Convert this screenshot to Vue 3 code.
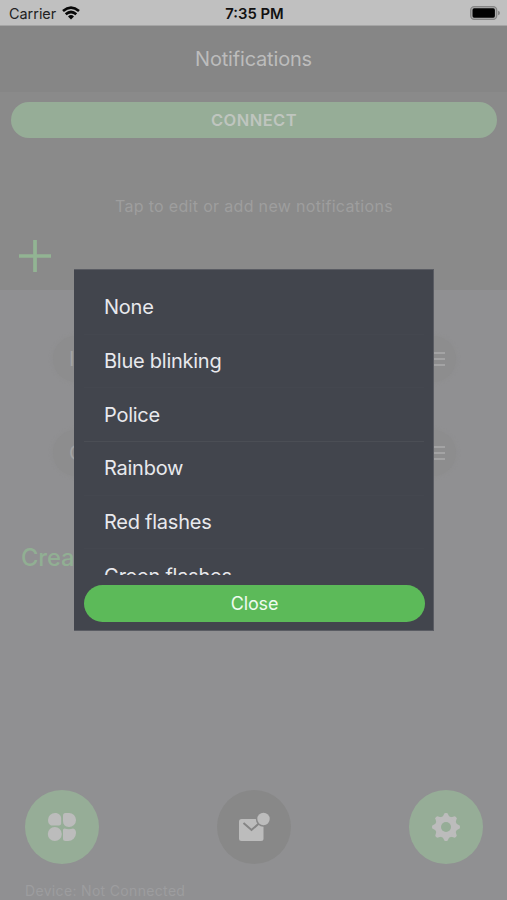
<script setup>
const effects = ['None', 'Blue blinking', 'Police', 'Rainbow', 'Red flashes', 'Green flashes']
const rows = [{ initial: 'I' }, { initial: 'C' }]
</script>

<template>
  <main class="screen">
    <header class="status">
      <div class="carrier">
        <span class="carrier-name">Carrier</span>
        <svg width="18" height="14" viewBox="0 0 18 14" fill="none" stroke="#080808" stroke-width="2.7">
          <path d="M1 5Q9-1.6 17 5" />
          <path d="M3.7 8.2Q9 3.8 14.3 8.2" />
          <path d="M6 10.4Q9 7.8 12 10.4L9 13.5Z" fill="#080808" stroke="none" />
        </svg>
      </div>
      <span class="time">7:35 PM</span>
      <svg class="battery" width="30" height="14" viewBox="0 0 30 14">
        <rect x=".7" y=".7" width="26" height="12.6" rx="3.5" fill="#adadad" stroke="#858585" stroke-width="1.3" />
        <rect x="2.5" y="2.3" width="22.4" height="9.4" rx="1.6" fill="#020202" />
        <path d="M28 4.7Q30 5.3 30 7T28 9.3Z" fill="#858585" />
      </svg>
    </header>
    <div class="title"><span>Notifications</span></div>
    <section class="intro">
      <button class="connect"><span>CONNECT</span></button>
      <p class="hint"><span>Tap to edit or add new notifications</span></p>
      <svg class="plus" width="34" height="34" viewBox="0 0 34 34" stroke="#92b493" stroke-width="3.7">
        <path d="M1 17H33M17 1V33" />
      </svg>
    </section>
    <section class="rows">
      <div v-for="row in rows" :key="row.initial" class="row">
        <span>{{ row.initial }}</span>
        <svg width="20" height="18" viewBox="0 0 20 18" stroke="#a3a3a4" stroke-width="2.2">
          <path d="M0 3H20M0 9H20M0 15H20" />
        </svg>
      </div>
      <h2 class="create"><span>Create</span></h2>
    </section>
    <nav class="nav">
      <button class="round">
        <svg width="30" height="30" viewBox="0 0 30 30" fill="#bcbcbc">
          <path d="M8 1C12 1 14.2 3.5 14.2 7V11.5Q14 13.5 12 13.5H4Q1 12 1 8A7 7 0 0 1 8 1Z" />
          <path d="M18.5 1H22A7 7 0 0 1 29 8A7 7 0 0 1 22 15C18 15 16 12 16 9V3.5Q16 1 18.5 1Z" />
          <circle cx="7.8" cy="22" r="7" />
          <path d="M17.5 16.5Q22 18 26 16.5Q29 17 29 21A8 8 0 0 1 21 29H18.5Q16 29 16 26.5V18Q16 16.5 17.5 16.5Z" />
        </svg>
      </button>
      <button class="round gray">
        <svg width="34" height="30" viewBox="0 0 34 30">
          <rect x="2" y="7" width="24.5" height="22" rx="2.5" fill="#bcbcbc" />
          <path d="M6.5 11L14.5 18L23 10.5" fill="none" stroke="#858585" stroke-width="2" />
          <circle cx="26.5" cy="7" r="7.7" fill="#888888" />
          <circle cx="26.5" cy="7" r="6.2" fill="#bcbcbc" />
        </svg>
      </button>
      <button class="round">
        <svg width="30" height="30" viewBox="0 0 30 30">
          <g fill="#bcbcbc">
            <circle cx="15" cy="15" r="11" />
            <path v-for="i in 8" :key="i" d="M11.5 5L13.5 1.3Q15 .5 16.5 1.3L18.5 5Z" :transform="`rotate(${i * 45} 15 15)`" />
          </g>
          <circle cx="15" cy="15" r="5" fill="#96ad97" />
        </svg>
      </button>
    </nav>
    <footer class="device"><span>Device: Not Connected</span></footer>

    <div class="dialog" role="dialog">
      <ul class="options">
        <li v-for="effect in effects" :key="effect"><span>{{ effect }}</span></li>
      </ul>
      <button class="close"><span>Close</span></button>
    </div>
  </main>
</template>

<style>
body { margin: 0; }
</style>

<style scoped>
* { box-sizing: border-box; }
.screen { position: relative; width: 507px; height: 900px; overflow: hidden; display: flex; flex-direction: column; background: #909092; font-family: Inter, sans-serif; }
button { border: 0; padding: 0; font-family: inherit; }
.status { height: 26px; flex: none; display: grid; grid-template-columns: 1fr auto 1fr; align-items: center; padding: 1px 7px 0 9px; background: #c0c0c0; border-bottom: 1px solid #a5a5a5; color: #111; }
.carrier { display: flex; align-items: center; gap: 6px; font-size: 14.4px; color: #222; }
.time { padding-top: 1px; font-size: 14.8px; font-weight: 600; }
.battery { justify-self: end; }
.title { height: 66px; flex: none; display: flex; justify-content: center; align-items: center; background: #868686; color: #bcbcbc; font-size: 20px; letter-spacing: -.18px; }
.intro { height: 198px; flex: none; padding: 10px 10px 0 11px; background: #8a8a8a; }
.connect { display: flex; width: 100%; height: 36px; align-items: center; justify-content: center; border-radius: 18px; background: #96ad97; color: #bfc5bf; font-size: 16.5px; font-weight: 600; letter-spacing: .45px; }
.hint { display: flex; justify-content: center; margin: 56px 0 0; height: 24px; font-size: 16px; line-height: 24px; letter-spacing: .32px; color: #9e9e9e; }
.plus { display: block; margin: 21px 0 0 7px; }
.rows { height: 500px; flex: none; padding-top: 46px; }
.row { height: 46px; margin: 0 51px 48px 53px; padding: 0 11px 0 16px; display: flex; align-items: center; justify-content: space-between; border-radius: 23px; background: #8d8d8e; box-shadow: 0 0 4px #8d8d8e; color: #a3a3a4; font-size: 20px; }
.create { margin: 67px 0 0 21px; font-size: 23.7px; line-height: 30px; font-weight: 500; letter-spacing: -.1px; color: #91af93; }
.nav { height: 74px; flex: none; padding: 0 24px 0 25px; display: flex; justify-content: space-between; }
.round { width: 74px; height: 74px; border-radius: 50%; display: flex; align-items: center; justify-content: center; background: #96ad97; }
.gray { background: #888888; }
.device { padding: 17px 0 0 25px; font-size: 14px; line-height: 20px; letter-spacing: .33px; color: #9d9d9f; white-space: nowrap; }
.dialog { position: absolute; left: 74px; top: 269px; width: 360px; height: 362px; padding: 11px 9px 9px 10px; background: #42454d; border: 1px solid #5a5c63; border-left-width: 0; }
.options { list-style: none; margin: 0; padding: 0; height: 294px; overflow: hidden; }
.options li { height: 53.7px; display: flex; align-items: center; padding-left: 20px; border-bottom: 1px solid #44474f; color: #e8e9ed; font-size: 20px; letter-spacing: -.25px; }
.options li:nth-child(3) { border-bottom-color: #4b4e55; }
.close { display: flex; align-items: center; justify-content: center; width: 341px; height: 37px; margin-top: 10px; border-radius: 19px; background: #5cba59; color: #effbef; font-size: 18px; letter-spacing: -.15px; }
</style>
